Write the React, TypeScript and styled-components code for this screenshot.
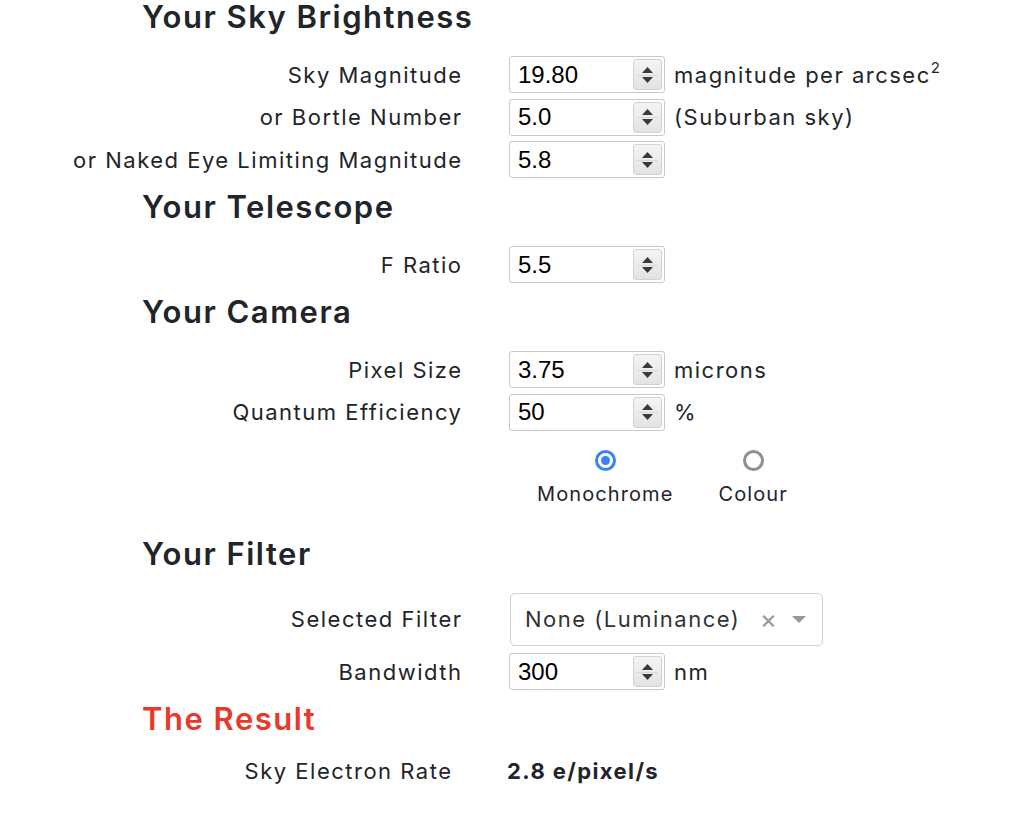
import React, { useState } from 'react';
import styled, { createGlobalStyle } from 'styled-components';

const GlobalStyle = createGlobalStyle`
  html, body {
    margin: 0;
    padding: 0;
    background: #ffffff;
  }
  body {
    font-family: Inter, "Noto Sans", "Liberation Sans", sans-serif;
    color: #212529;
  }
`;

interface RowProps {
  label: string;
  value: string;
  unit?: React.ReactNode;
}

function NumberRow({ label, value, unit }: RowProps): JSX.Element {
  return (
    <Row>
      <Label>{label}</Label>
      <NumberBox>
        <NumberValue>{value}</NumberValue>
        <Spinner>
          <svg width='13' height='24' viewBox='0 0 13 24'>
            <path d='M1 10 L6.5 4 L12 10 Z' fill='#3a3a3a' />
            <path d='M1 14 L6.5 20 L12 14 Z' fill='#3a3a3a' />
          </svg>
        </Spinner>
      </NumberBox>
      {unit && <Unit>{unit}</Unit>}
    </Row>
  );
}

export default function App(): JSX.Element {
  const [sensor, setSensor] = useState<'mono' | 'colour'>('mono');

  return (
    <Page>
      <GlobalStyle />
      <Heading>Your Sky Brightness</Heading>
      <NumberRow label='Sky Magnitude' value='19.80' unit={<>magnitude per arcsec<sup>2</sup></>} />
      <NumberRow label='or Bortle Number' value='5.0' unit='(Suburban sky)' />
      <NumberRow label='or Naked Eye Limiting Magnitude' value='5.8' />

      <Heading>Your Telescope</Heading>
      <NumberRow label='F Ratio' value='5.5' />

      <Heading>Your Camera</Heading>
      <NumberRow label='Pixel Size' value='3.75' unit='microns' />
      <NumberRow label='Quantum Efficiency' value='50' unit='%' />
      <RadioGroup>
        <RadioItem onClick={() => setSensor('mono')}>
          <RadioDot checked={sensor === 'mono'} />
          <RadioText>Monochrome</RadioText>
        </RadioItem>
        <RadioItem onClick={() => setSensor('colour')}>
          <RadioDot checked={sensor === 'colour'} />
          <RadioText>Colour</RadioText>
        </RadioItem>
      </RadioGroup>

      <Heading>Your Filter</Heading>
      <SelectRow>
        <Label>Selected Filter</Label>
        <Select>
          <SelectValue>None (Luminance)</SelectValue>
          <SelectClear>×</SelectClear>
          <SelectArrow />
        </Select>
      </SelectRow>
      <NumberRow label='Bandwidth' value='300' unit='nm' />

      <Heading red>The Result</Heading>
      <ResultRow>
        <ResultLabel>Sky Electron Rate</ResultLabel>
        <ResultValue>2.8 e/pixel/s</ResultValue>
      </ResultRow>
    </Page>
  );
}

const Page = styled.div`
  width: 1024px;
  height: 827px;
  overflow: hidden;
  margin-top: -1px;
`;

const Heading = styled.h2<{ red?: boolean }>`
  margin: 11px 0 21px 142px;
  font-size: 31px;
  line-height: 36px;
  font-weight: 600;
  letter-spacing: 1.5px;
  color: ${(p) => (p.red ? '#e8392a' : '#212529')};
  &:first-child {
    margin-top: 0;
  }
`;

const Row = styled.div`
  display: flex;
  align-items: center;
  margin-bottom: 5.5px;
`;

const SelectRow = styled(Row)`
  margin-bottom: 7.5px;
`;

const Label = styled.div`
  width: 462.5px;
  text-align: right;
  font-size: 22px;
  letter-spacing: 1.5px;
  line-height: 26px;
  margin-right: 46.5px;
  flex-shrink: 0;
  white-space: nowrap;
`;

const NumberBox = styled.div`
  box-sizing: border-box;
  width: 156px;
  height: 37px;
  border: 1px solid #c9c9c9;
  border-radius: 3px;
  display: flex;
  align-items: center;
  justify-content: space-between;
  padding: 0 2px 0 8px;
  background: #fff;
`;

const NumberValue = styled.span`
  font-family: "Liberation Sans", Arial, sans-serif;
  font-size: 24px;
  color: #000;
`;

const Spinner = styled.div`
  box-sizing: border-box;
  width: 29px;
  height: 31px;
  border: 1px solid #d2d2d2;
  border-radius: 3px;
  background: linear-gradient(#f4f4f4, #e3e3e3);
  display: flex;
  align-items: center;
  justify-content: center;
  position: relative;
  &::after {
    content: '';
    position: absolute;
    left: 3px;
    right: 3px;
    top: 50%;
    border-top: 1px solid #d8d8d8;
  }
`;

const Unit = styled.span`
  margin-left: 9px;
  font-size: 22px;
  letter-spacing: 1.5px;
  line-height: 26px;
  white-space: nowrap;
  sup {
    font-size: 15px;
    letter-spacing: 0;
    line-height: 0;
    vertical-align: 10px;
  }
`;

const RadioGroup = styled.div`
  display: flex;
  gap: 45px;
  margin: 19px 0 30px 537px;
`;

const RadioItem = styled.label`
  display: flex;
  flex-direction: column;
  align-items: center;
  gap: 11px;
  cursor: pointer;
`;

const RadioDot = styled.span<{ checked: boolean }>`
  box-sizing: border-box;
  width: 21px;
  height: 21px;
  border-radius: 50%;
  border: ${(p) => (p.checked ? '3px solid #3b82f6' : '3px solid #8e8e93')};
  background: #fff;
  display: flex;
  align-items: center;
  justify-content: center;
  &::after {
    content: '';
    width: 9px;
    height: 9px;
    border-radius: 50%;
    background: ${(p) => (p.checked ? '#3b82f6' : 'transparent')};
  }
`;

const RadioText = styled.span`
  font-size: 20px;
  letter-spacing: 1.1px;
  line-height: 24px;
`;

const Select = styled.div`
  box-sizing: border-box;
  width: 313px;
  height: 53px;
  border: 1px solid #d0d0d0;
  border-radius: 5px;
  display: flex;
  align-items: center;
  padding: 0 16px 0 14px;
  margin-left: 1px;
`;

const SelectValue = styled.span`
  flex: 1;
  font-size: 22px;
  letter-spacing: 1.5px;
  color: #333;
  white-space: nowrap;
`;

const SelectClear = styled.span`
  font-size: 26px;
  color: #999;
  margin-right: 15px;
  line-height: 1;
`;

const SelectArrow = styled.span`
  width: 0;
  height: 0;
  border-left: 7px solid transparent;
  border-right: 7px solid transparent;
  border-top: 7px solid #999;
`;

const ResultRow = styled.div`
  display: flex;
  align-items: center;
  height: 26px;
  margin-top: 3px;
`;

const ResultLabel = styled.div`
  width: 452.5px;
  text-align: right;
  font-size: 22px;
  letter-spacing: 1.5px;
  margin-right: 54.5px;
  white-space: nowrap;
`;

const ResultValue = styled.div`
  font-size: 22px;
  letter-spacing: 1.4px;
  font-weight: 700;
  white-space: nowrap;
`;
